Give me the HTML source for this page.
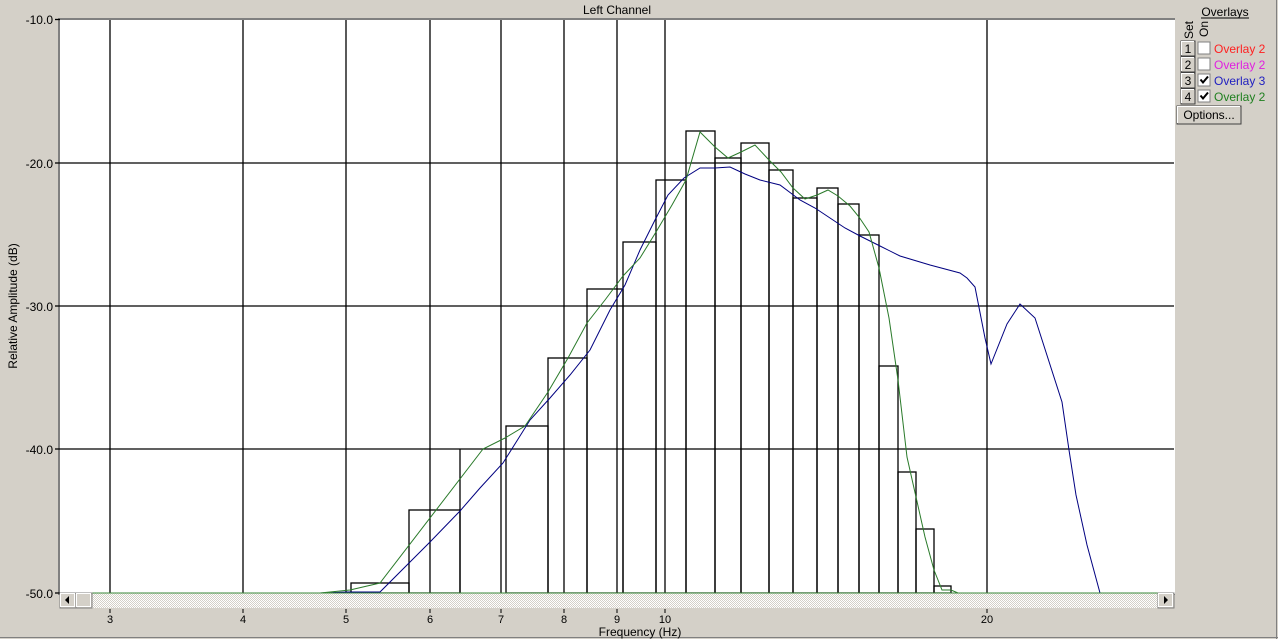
<!DOCTYPE html>
<html><head><style>
body{margin:0;width:1278px;height:639px;overflow:hidden;background:#d4d0c8;font-family:"Liberation Sans",sans-serif;}
</style></head><body>
<svg width="1278" height="639" xmlns="http://www.w3.org/2000/svg" style="position:absolute;left:0;top:0" font-family="Liberation Sans, sans-serif" font-size="12">
<defs>
<pattern id="chk" width="2" height="2" patternUnits="userSpaceOnUse"><rect width="2" height="2" fill="#fff"/><rect width="1" height="1" fill="#d4d0c8"/><rect x="1" y="1" width="1" height="1" fill="#d4d0c8"/></pattern>
</defs>
<rect x="0" y="0" width="1278" height="639" fill="#d4d0c8"/>
<line x1="0" y1="637.5" x2="1278" y2="637.5" stroke="#808080"/>
<line x1="1276.5" y1="0" x2="1276.5" y2="639" stroke="#808080"/>
<text x="617" y="14" text-anchor="middle">Left Channel</text>
<rect x="58" y="18" width="1117" height="577" fill="#808080"/>
<rect x="60" y="20" width="1115" height="574" fill="#fff"/>
<g stroke="#000" stroke-width="1.3">
<line x1="60" y1="163" x2="1174" y2="163"/><line x1="60" y1="306" x2="1174" y2="306"/><line x1="60" y1="449" x2="1174" y2="449"/>
<line x1="110" y1="20" x2="110" y2="593"/><line x1="243" y1="20" x2="243" y2="593"/><line x1="346" y1="20" x2="346" y2="593"/><line x1="430" y1="20" x2="430" y2="593"/><line x1="501" y1="20" x2="501" y2="593"/><line x1="564" y1="20" x2="564" y2="593"/><line x1="617" y1="20" x2="617" y2="593"/><line x1="665" y1="20" x2="665" y2="593"/><line x1="987" y1="20" x2="987" y2="593"/>
<line x1="55" y1="19.5" x2="60" y2="19.5"/><line x1="55" y1="163" x2="60" y2="163"/><line x1="55" y1="306" x2="60" y2="306"/><line x1="55" y1="449" x2="60" y2="449"/><line x1="55" y1="593" x2="60" y2="593"/>
</g>
<g stroke="#000" stroke-width="1.3" fill="none">
<rect x="351" y="583" width="58" height="10"/>
<rect x="409" y="510" width="51" height="83"/>
<line x1="460" y1="449" x2="460" y2="593"/>
<rect x="506" y="426" width="42" height="167"/>
<rect x="548" y="358" width="39" height="235"/>
<rect x="587" y="289" width="36" height="304"/>
<rect x="623" y="242" width="33" height="351"/>
<rect x="656" y="180" width="30" height="413"/>
<rect x="686" y="131" width="29" height="462"/>
<rect x="715" y="158" width="26" height="435"/>
<rect x="741" y="143" width="28" height="450"/>
<rect x="769" y="170" width="24" height="423"/>
<rect x="793" y="198" width="24" height="395"/>
<rect x="817" y="188" width="21" height="405"/>
<rect x="838" y="204" width="21" height="389"/>
<rect x="859" y="235" width="20" height="358"/>
<rect x="879" y="366" width="19" height="227"/>
<rect x="898" y="472" width="18" height="121"/>
<rect x="916" y="529" width="18" height="64"/>
<rect x="934" y="586" width="17" height="7"/>
</g>
<polyline fill="none" stroke="#000080" stroke-width="1" points="60,593 320,593 348,592 380,592 410,562 430,542 460,511 480,488 503,463 530,420 550,398 570,375 590,350 610,310 625,285 640,250 655,220 668,195 684,178 700,168 715,168 730,167 745,174 760,180 780,185 800,200 815,208 830,218 845,228 860,236 880,246 900,256 930,265 960,273 967,278 975,287 985,338 991,364 1007,324 1020,304 1035,318 1062,402 1069,450 1076,495 1087,545 1100,593"/>
<polyline fill="none" stroke="#2a7a2a" stroke-width="1" points="60,593 320,593 350,590 380,583 483,449 505,438 525,426 548,392 568,358 587,323 605,300 623,276 640,258 656,232 672,205 686,180 700,132 715,147 728,158 741,152 755,145 769,160 781,172 793,188 805,199 817,195 828,190 838,196 850,206 859,217 869,232 879,268 889,318 898,380 907,457 916,497 925,537 934,570 942,590 951,590 958,593 1174,593"/>
<rect x="60" y="593" width="1114" height="15" fill="url(#chk)"/>
<line x1="60" y1="593" x2="1174" y2="593" stroke="#3a8a3a" stroke-width="1"/>
<g>
<rect x="60" y="593" width="16" height="15" fill="#d4d0c8" stroke="#808080"/><rect x="60.5" y="593.5" width="14" height="13" fill="none" stroke="#fff"/>
<path d="M69 596V604L65 600Z" fill="#000"/>
<rect x="76" y="593" width="16" height="15" fill="#d4d0c8" stroke="#808080"/><rect x="76.5" y="593.5" width="14" height="13" fill="none" stroke="#fff"/>
<rect x="1158" y="593" width="16" height="15" fill="#d4d0c8" stroke="#808080"/><rect x="1158.5" y="593.5" width="14" height="13" fill="none" stroke="#fff"/>
<path d="M1164 596V604L1168 600Z" fill="#000"/>
</g>
<g stroke="#000"><line x1="110" y1="609" x2="110" y2="613"/><line x1="243" y1="609" x2="243" y2="613"/><line x1="346" y1="609" x2="346" y2="613"/><line x1="430" y1="609" x2="430" y2="613"/><line x1="501" y1="609" x2="501" y2="613"/><line x1="564" y1="609" x2="564" y2="613"/><line x1="617" y1="609" x2="617" y2="613"/><line x1="665" y1="609" x2="665" y2="613"/><line x1="987" y1="609" x2="987" y2="613"/></g>
<g text-anchor="middle" font-size="11">
<text x="110" y="623">3</text><text x="243" y="623">4</text><text x="346" y="623">5</text><text x="430" y="623">6</text><text x="501" y="623">7</text><text x="564" y="623">8</text><text x="617" y="623">9</text><text x="665" y="623">10</text><text x="987" y="623">20</text>
</g>
<text x="640" y="636" text-anchor="middle">Frequency (Hz)</text>
<g text-anchor="end">
<text x="53" y="24">-10.0</text><text x="53" y="168">-20.0</text><text x="53" y="311">-30.0</text><text x="53" y="454">-40.0</text><text x="53" y="598">-50.0</text>
</g>
<text transform="translate(17,306) rotate(-90)" text-anchor="middle">Relative Amplitude (dB)</text>
<text x="1225" y="16" text-anchor="middle">Overlays</text>
<line x1="1201" y1="18" x2="1249" y2="18" stroke="#000"/>
<text transform="translate(1193,21) rotate(-90)" text-anchor="end">Set</text>
<text transform="translate(1208,21) rotate(-90)" text-anchor="end">On</text>
<g>
<g transform="translate(0,41)"><rect x="1181" y="0" width="14" height="15" fill="#d4d0c8" stroke="#404040"/><path d="M1181.5 14V0.5H1194" stroke="#fff" fill="none"/><text x="1188" y="12" text-anchor="middle">1</text><rect x="1198" y="1" width="12" height="12" fill="#fff" stroke="#808080"/><text x="1214" y="12" fill="#ff2020">Overlay 2</text></g>
<g transform="translate(0,57)"><rect x="1181" y="0" width="14" height="15" fill="#d4d0c8" stroke="#404040"/><path d="M1181.5 14V0.5H1194" stroke="#fff" fill="none"/><text x="1188" y="12" text-anchor="middle">2</text><rect x="1198" y="1" width="12" height="12" fill="#fff" stroke="#808080"/><text x="1214" y="12" fill="#e020e0">Overlay 2</text></g>
<g transform="translate(0,73)"><rect x="1181" y="0" width="14" height="15" fill="#d4d0c8" stroke="#404040"/><path d="M1181.5 14V0.5H1194" stroke="#fff" fill="none"/><text x="1188" y="12" text-anchor="middle">3</text><rect x="1198" y="1" width="12" height="12" fill="#fff" stroke="#808080"/><path d="M1200.5 6.5L1203 9.5L1208 3.5" stroke="#000" stroke-width="2" fill="none"/><text x="1214" y="12" fill="#2020c0">Overlay 3</text></g>
<g transform="translate(0,89)"><rect x="1181" y="0" width="14" height="15" fill="#d4d0c8" stroke="#404040"/><path d="M1181.5 14V0.5H1194" stroke="#fff" fill="none"/><text x="1188" y="12" text-anchor="middle">4</text><rect x="1198" y="1" width="12" height="12" fill="#fff" stroke="#808080"/><path d="M1200.5 6.5L1203 9.5L1208 3.5" stroke="#000" stroke-width="2" fill="none"/><text x="1214" y="12" fill="#208020">Overlay 2</text></g>
</g>
<rect x="1177" y="106" width="64" height="18" fill="#d4d0c8" stroke="#404040"/><path d="M1177.5 123V106.5H1240" stroke="#fff" fill="none"/>
<text x="1209" y="119" text-anchor="middle">Options...</text>
</svg>
</body></html>
